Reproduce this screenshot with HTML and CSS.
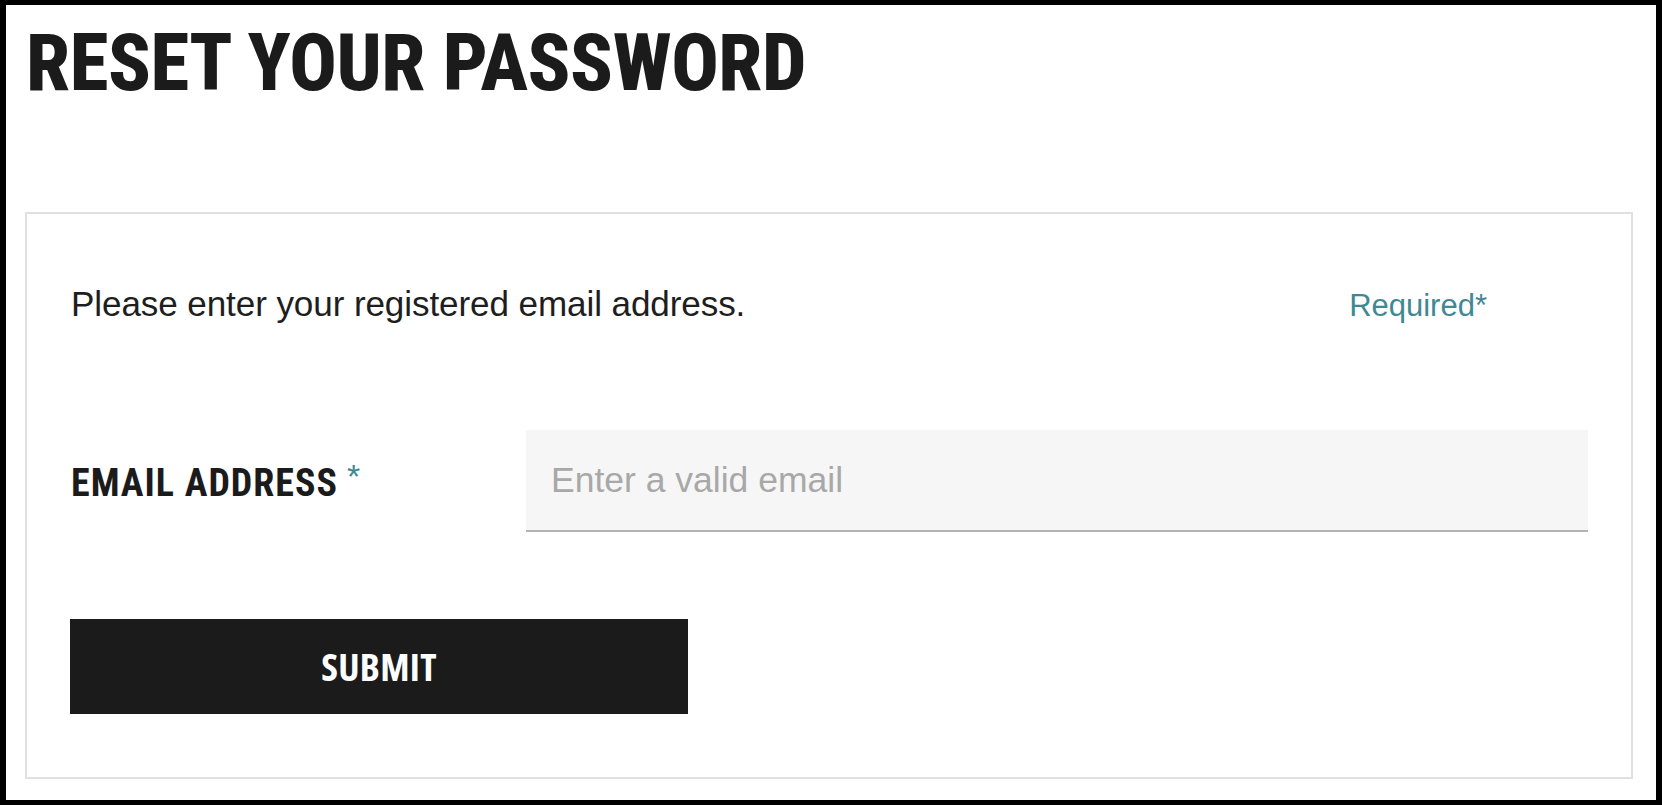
FILE: index.html
```html
<!DOCTYPE html>
<html lang="en">
<head>
<meta charset="utf-8">
<title>Reset your password</title>
<link rel="stylesheet" href="styles.css">
</head>
<body>
<div class="frame">
  <h1 class="title">RESET YOUR PASSWORD</h1>
  <form class="card" onsubmit="return false">
    <div class="intro">
      <p class="intro-text">Please enter your registered email address.</p>
      <span class="required-note">Required*</span>
    </div>
    <div class="field">
      <label class="field-label" for="email">EMAIL ADDRESS<span class="star">*</span></label>
      <input class="field-input" id="email" type="email" placeholder="Enter a valid email">
    </div>
    <button class="submit" type="submit">SUBMIT</button>
  </form>
</div>
</body>
</html>
```

FILE: styles.css
```css
* { box-sizing: border-box; }
html, body { margin: 0; padding: 0; background: #fff; }
body {
  width: 1662px;
  height: 805px;
  overflow: hidden;
  font-family: "Liberation Sans", Arial, sans-serif;
  color: #1b1b1b;
}
.frame {
  width: 1662px;
  height: 805px;
  border-style: solid;
  border-color: #000;
  border-width: 5px 6px 5px 6px;
  padding: 19px 23px 0 19px;
  display: flex;
  flex-direction: column;
}
.title {
  margin: 0 0 109px 1px;
  font-family: "Roboto", sans-serif;
  font-stretch: 80%;
  font-weight: 800;
  font-size: 79px;
  line-height: 79px;
  letter-spacing: -0.5px;
  color: #1b1b1b;
}
.card {
  border: 2px solid #e0e0e0;
  height: 567px;
  padding: 70px 43px 0 44px;
  display: flex;
  flex-direction: column;
}
.intro {
  display: flex;
  justify-content: space-between;
  align-items: baseline;
  padding-right: 101px;
  height: 40px;
}
.intro-text {
  margin: 0;
  font-size: 35.1px;
  line-height: 40px;
  letter-spacing: -0.1px;
  color: #1e1e1e;
}
.required-note {
  font-size: 31px;
  line-height: 40px;
  color: #3f8894;
}
.field {
  margin-top: 106px;
  display: flex;
  align-items: center;
  height: 102px;
}
.field-label {
  width: 455px;
  flex: none;
  font-family: "Roboto", sans-serif;
  font-stretch: 75%;
  font-weight: 700;
  font-size: 38px;
  letter-spacing: 1px;
  color: #1b1b1b;
  padding-top: 0;
}
.star {
  color: #3f8894;
  font-family: "Liberation Sans", Arial, sans-serif;
  font-weight: 400;
  font-size: 34px;
  margin-left: 9px;
  vertical-align: 8px;
}
.field-input {
  flex: 1;
  height: 102px;
  border: none;
  border-bottom: 2px solid #b3b3b3;
  background: #f6f6f6;
  padding: 0 25px;
  font-family: "Liberation Sans", Arial, sans-serif;
  font-size: 35.5px;
  color: #1b1b1b;
  outline: none;
}
.field-input::placeholder { color: #a8a8a8; }
.submit {
  margin-top: 87px;
  margin-left: -1px;
  width: 618px;
  height: 95px;
  border: none;
  background: #1b1b1b;
  color: #fff;
  font-family: "Open Sans", sans-serif;
  font-stretch: 75%;
  font-weight: 700;
  font-size: 38px;
  letter-spacing: 0.3px;
  padding-bottom: 2px;
  cursor: pointer;
}
```
